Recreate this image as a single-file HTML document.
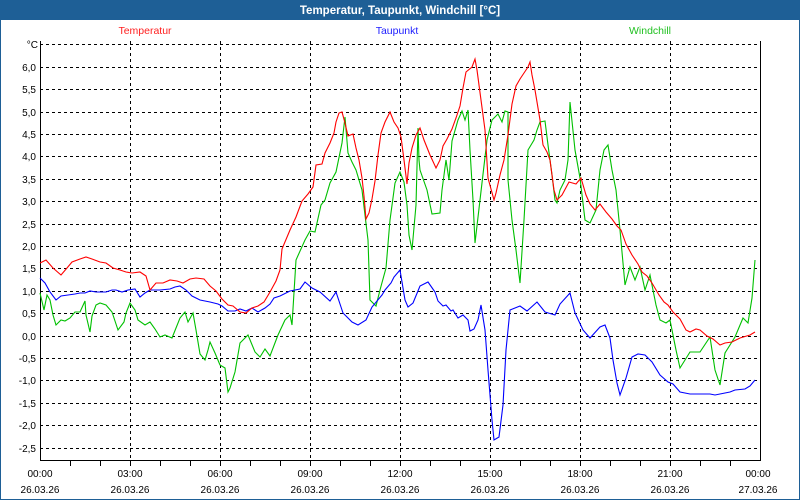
<!DOCTYPE html>
<html><head><meta charset="utf-8"><style>
html,body{margin:0;padding:0;background:#fff;}
svg{display:block;font-family:"Liberation Sans","DejaVu Sans",sans-serif;}
</style></head><body>
<svg width="800" height="500" viewBox="0 0 800 500" xmlns="http://www.w3.org/2000/svg">
<rect x="0" y="0" width="800" height="500" fill="#1e5f96"/>
<rect x="1" y="20" width="798" height="479" fill="#fff"/>
<text x="400" y="14" fill="#fff" font-size="11.5" font-weight="bold" text-anchor="middle">Temperatur, Taupunkt, Windchill [°C]</text>
<text x="145" y="34" fill="#ff2020" font-size="10.5" text-anchor="middle">Temperatur</text>
<text x="397" y="34" fill="#2020ff" font-size="10.5" text-anchor="middle">Taupunkt</text>
<text x="650" y="34" fill="#20c020" font-size="10.5" text-anchor="middle">Windchill</text>
<g stroke="#000" stroke-width="1" stroke-dasharray="3,3" fill="none" shape-rendering="crispEdges">
<path d="M40 44.5H760M40 67.5H760M40 89.5H760M40 112.5H760M40 134.5H760M40 156.5H760M40 179.5H760M40 201.5H760M40 224.5H760M40 246.5H760M40 268.5H760M40 291.5H760M40 313.5H760M40 336.5H760M40 358.5H760M40 380.5H760M40 403.5H760M40 425.5H760M40 448.5H760"/>
<path d="M130.5 41V460M220.5 41V460M310.5 41V460M400.5 41V460M490.5 41V460M580.5 41V460M670.5 41V460"/>
</g>
<g stroke="#000" stroke-width="1" fill="none" shape-rendering="crispEdges">
<path d="M40.5 41V460.5H760.5V41"/>
<path d="M70.5 460V466M100.5 460V466M130.5 460V466M160.5 460V466M190.5 460V466M220.5 460V466M250.5 460V466M280.5 460V466M310.5 460V466M340.5 460V466M370.5 460V466M400.5 460V466M430.5 460V466M460.5 460V466M490.5 460V466M520.5 460V466M550.5 460V466M580.5 460V466M610.5 460V466M640.5 460V466M670.5 460V466M700.5 460V466M730.5 460V466"/>
</g>
<g font-size="10" fill="#000" text-anchor="end">
<text x="38" y="48">°C</text>
<text x="36" y="71">6,0</text><text x="36" y="93">5,5</text><text x="36" y="116">5,0</text><text x="36" y="138">4,5</text><text x="36" y="160">4,0</text><text x="36" y="183">3,5</text><text x="36" y="205">3,0</text><text x="36" y="228">2,5</text><text x="36" y="250">2,0</text><text x="36" y="272">1,5</text><text x="36" y="295">1,0</text><text x="36" y="317">0,5</text><text x="36" y="340">0,0</text><text x="36" y="362">-0,5</text><text x="36" y="384">-1,0</text><text x="36" y="407">-1,5</text><text x="36" y="429">-2,0</text><text x="36" y="452">-2,5</text>
</g>
<g font-size="10" fill="#000" text-anchor="middle">
<text x="40" y="477">00:00</text><text x="40" y="493">26.03.26</text>
<text x="130" y="477">03:00</text><text x="130" y="493">26.03.26</text>
<text x="220" y="477">06:00</text><text x="220" y="493">26.03.26</text>
<text x="310" y="477">09:00</text><text x="310" y="493">26.03.26</text>
<text x="400" y="477">12:00</text><text x="400" y="493">26.03.26</text>
<text x="490" y="477">15:00</text><text x="490" y="493">26.03.26</text>
<text x="580" y="477">18:00</text><text x="580" y="493">26.03.26</text>
<text x="670" y="477">21:00</text><text x="670" y="493">26.03.26</text>
<text x="758" y="477">00:00</text><text x="758" y="493">27.03.26</text>
</g>
<g fill="none" stroke-width="1.1" stroke-linejoin="miter">
<polyline stroke="#00c000" points="40,293 44,310 47,295 50,300 53,315 56,325 61,320 65,321 70,318 75,312 80,312 85,301 86,315 90,332 92,316 96,305 100,303 106,305 112,312 118,330 124,322 126,313 130,303 135,310 138,320 145,325 150,322 155,329 160,337 165,335 172,338 180,318 185,312 188,322 193,313 196,330 200,354 205,360 208,350 210,342 215,353 220,365 225,368 228,392 230,388 235,372 240,343 248,335 255,352 260,357 265,349 270,356 278,335 285,320 290,315 292,325 296,260 305,240 310,231 315,232 321,205 325,200 330,183 336,172 342,143 345,117 348,153 352,162 356,170 362,190 368,240 370,300 376,306 380,290 386,268 390,220 395,183 400,172 404,182 407,205 409,235 412,250 416,205 418,128 419,160 420,170 427,190 432,214 440,213 442,190 446,160 449,180 452,141 458,120 462,111 465,120 468,110 470,150 473,200 475,243 480,200 487,140 492,120 498,114 502,122 505,111 508,112 508,180 512,220 516,250 520,283 524,220 528,150 534,140 537,130 540,122 545,121 548,145 552,175 555,200 557,203 560,190 565,180 568,160 570,102 575,150 580,178 585,220 590,223 596,210 600,170 604,150 608,145 612,170 616,190 620,230 625,285 630,267 635,280 640,267 645,290 650,275 656,305 660,320 666,323 670,320 676,350 680,368 685,360 690,352 700,352 710,337 715,370 720,385 725,353 735,337 743,318 748,323 752,298 755,260"/>
<polyline stroke="#0000ff" points="40,278 45,283 50,292 56,300 61,296 68,295 75,294 80,293 85,293 90,291 96,292 106,292 112,290 116,290 122,292 128,290 135,289 140,297 145,293 150,290 160,290 170,289 175,287 180,286 186,290 192,296 200,300 210,302 218,304 222,306 228,311 235,311 240,309 246,311 252,308 258,312 265,308 270,304 274,298 280,296 290,291 300,289 305,282 312,288 320,292 330,301 336,292 343,313 352,322 358,325 366,320 372,307 382,295 385,290 391,283 394,277 400,270 405,300 408,307 413,303 420,286 428,282 435,292 438,301 443,306 446,305 451,311 453,310 458,318 463,315 468,320 470,331 474,329 478,320 481,305 485,330 488,370 492,420 494,440 499,437 503,405 506,350 510,310 520,306 527,311 537,302 545,312 555,315 560,304 570,293 575,313 583,330 590,338 600,327 605,325 610,338 613,360 617,383 620,395 626,378 632,357 638,354 645,355 652,362 660,375 668,382 673,384 680,392 690,394 700,394 710,394 715,395 720,394 730,392 735,390 745,389 750,386 755,380"/>
<polyline stroke="#ff0000" points="40,263 46,260 53,268 61,275 67,268 72,262 80,259 86,257 92,259 100,262 106,263 113,268 120,270 126,272 132,273 140,272 146,276 150,290 156,283 163,283 170,280 177,281 183,283 190,279 196,278 204,279 210,286 216,291 222,299 228,305 233,306 240,312 246,313 252,308 258,306 264,302 270,292 276,281 280,270 282,249 290,230 296,217 302,201 308,194 313,187 316,165 322,164 325,153 330,143 334,133 336,122 339,113 342,112 345,123 348,136 353,134 356,148 359,160 362,178 364,196 366,219 369,213 372,199 375,181 378,155 381,133 385,122 390,112 394,122 398,128 401,137 404,160 407,184 409,163 412,148 416,135 420,128 424,140 430,155 436,168 440,160 443,146 447,139 452,129 456,118 460,106 463,88 466,72 472,67 475,59 477,70 481,100 485,130 488,178 494,200 496,193 500,175 504,160 508,135 512,104 516,86 520,79 524,73 528,67 530,62 532,75 535,90 540,120 543,145 547,152 550,160 554,190 557,200 562,195 569,182 576,184 581,178 586,195 590,204 595,210 600,204 606,212 612,219 617,226 621,230 626,244 632,255 638,264 642,272 647,276 652,283 659,295 664,302 668,305 673,312 680,319 686,330 690,332 696,329 700,330 707,336 713,339 720,345 725,343 732,342 740,338 750,335 755,332"/>
</g>
</svg>
</body></html>
